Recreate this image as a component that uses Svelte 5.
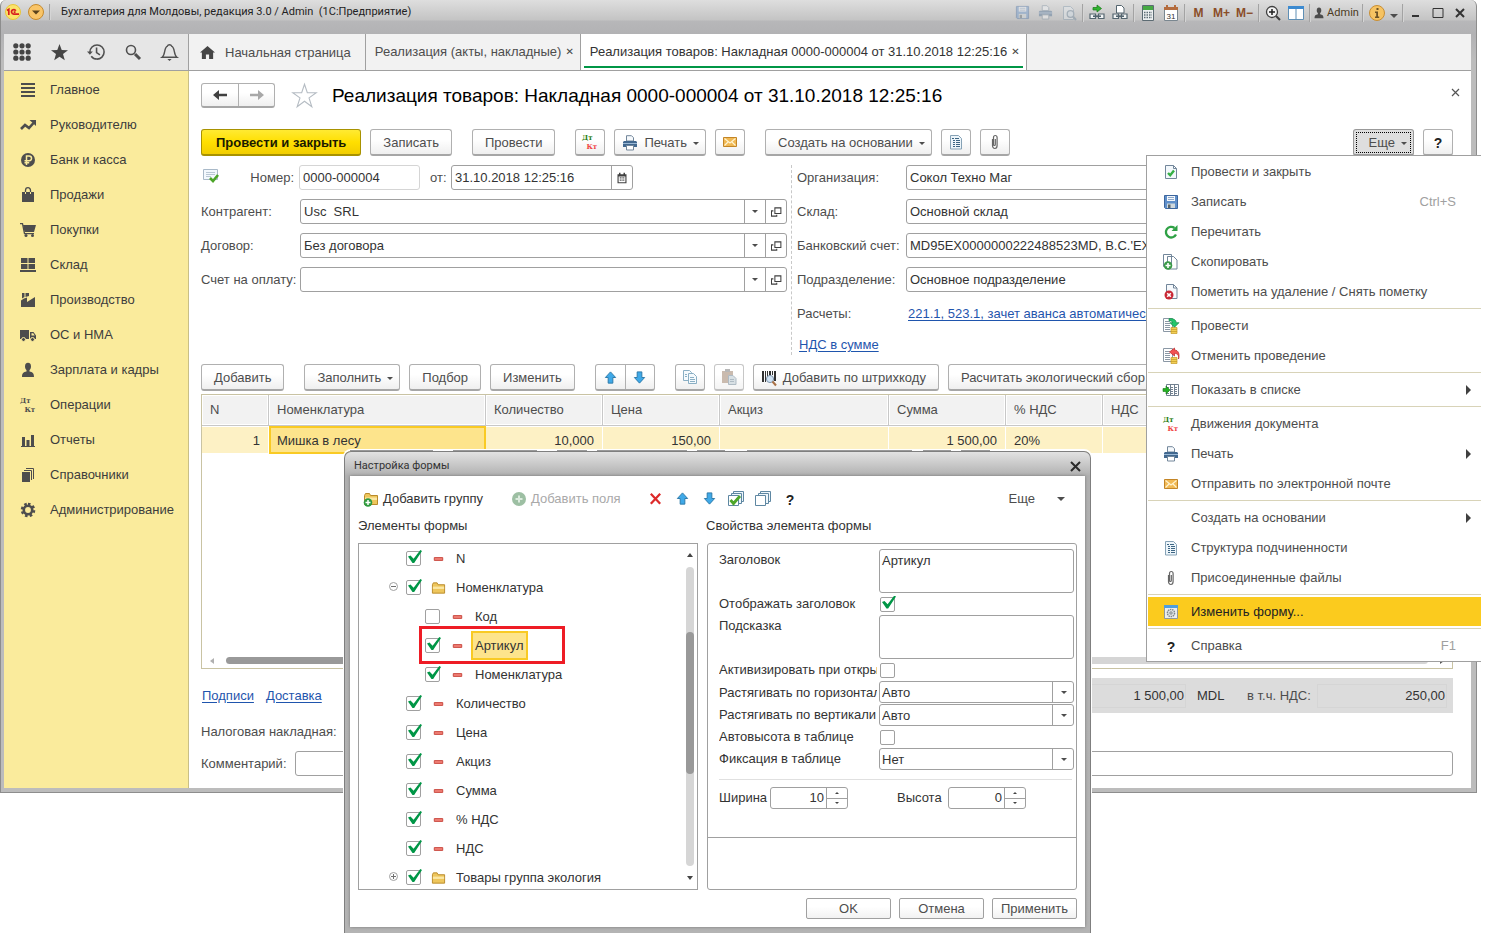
<script>
  const sections = [
    ['list', 'Главное'],
    ['trend', 'Руководителю'],
    ['ruble', 'Банк и касса'],
    ['bag', 'Продажи'],
    ['cart', 'Покупки'],
    ['boxes', 'Склад'],
    ['factory', 'Производство'],
    ['truck', 'ОС и НМА'],
    ['person', 'Зарплата и кадры'],
    ['dtktGray', 'Операции'],
    ['bars', 'Отчеты'],
    ['books', 'Справочники'],
    ['gear', 'Администрирование']
  ];

  const menu = [
    [
      { icon: 'docCheck', text: 'Провести и закрыть' },
      { icon: 'floppy', text: 'Записать', key: 'Ctrl+S' },
      { icon: 'reload', text: 'Перечитать' },
      { icon: 'docPlus', text: 'Скопировать' },
      { icon: 'docDel', text: 'Пометить на удаление / Снять пометку' }
    ],
    [
      { icon: 'post', text: 'Провести' },
      { icon: 'unpost', text: 'Отменить проведение' }
    ],
    [{ icon: 'showList', text: 'Показать в списке', sub: true }],
    [
      { icon: 'dtkt', text: 'Движения документа' },
      { icon: 'printer', text: 'Печать', sub: true },
      { icon: 'mail', text: 'Отправить по электронной почте' }
    ],
    [
      { icon: '', text: 'Создать на основании', sub: true },
      { icon: 'structure', text: 'Структура подчиненности' },
      { icon: 'clip', text: 'Присоединенные файлы' }
    ],
    [{ icon: 'formEdit', text: 'Изменить форму...', active: true }],
    [{ icon: 'question', text: 'Справка', key: 'F1' }]
  ];

  let tree = $state([
    { text: 'N', on: true },
    { text: 'Номенклатура', on: true, folder: 'open' },
    { text: 'Код', on: false, child: true },
    { text: 'Артикул', on: true, child: true, selected: true },
    { text: 'Номенклатура', on: true, child: true },
    { text: 'Количество', on: true },
    { text: 'Цена', on: true },
    { text: 'Акциз', on: true },
    { text: 'Сумма', on: true },
    { text: '% НДС', on: true },
    { text: 'НДС', on: true },
    { text: 'Товары группа экология', on: true, folder: 'closed' }
  ]);
</script>

{#snippet ic(name, size = 16)}
  <svg class="ic" width={size} height={size} viewBox="0 0 16 16" aria-hidden="true">
    {#if name === 'list'}
      <path fill="#4d4d4d" d="M1 1h14v2H1zM1 5h14v2H1zM1 9h14v2H1zM1 13h14v2H1z" />
    {:else if name === 'trend'}
      <path fill="none" stroke="#4d4d4d" stroke-width="2.6" d="M1 12l4-4 4 3 4.500-5" />
      <path fill="#4d4d4d" d="M9.500 3H16v6z" />
    {:else if name === 'ruble'}
      <circle cx="8" cy="8" r="7" fill="#4d4d4d" />
      <path fill="none" stroke="#faeb9c" stroke-width="1.500" d="M6.500 13V4h2.700a2.300 2.300 0 010 4.700H4.500M4.500 10.800h4.700" />
    {:else if name === 'bag'}
      <path fill="#4d4d4d" d="M2 5h12v10H2z" />
      <path fill="none" stroke="#4d4d4d" stroke-width="1.300" d="M5.500 5V3.500a2.500 2.800 0 015 0V5" />
      <path fill="none" stroke="#faeb9c" d="M5.500 5v2M10.500 5v2" />
    {:else if name === 'cart'}
      <path fill="none" stroke="#4d4d4d" stroke-width="1.300" d="M0 1.700h2.500l2 10h9.500" />
      <path fill="#4d4d4d" d="M3 3h13l-2 7H4.500z" />
      <circle cx="6" cy="13.500" r="1.500" fill="#4d4d4d" /><circle cx="12.500" cy="13.500" r="1.500" fill="#4d4d4d" />
    {:else if name === 'boxes'}
      <path fill="#4d4d4d" d="M1 1h6.500v5H1zM8.500 1H15v5H8.500zM1 7h6.500v5H1zM8.500 7H15v5H8.500zM0 13h16v2H0z" />
    {:else if name === 'factory'}
      <path fill="#4d4d4d" d="M1 15V8.500l3-2 3-1v4.500l8-5v10z" />
      <path fill="#4d4d4d" d="M2 1h2.500v4L2 6.500zM5.500 1H9v3L5.500 5z" />
    {:else if name === 'truck'}
      <path fill="#4d4d4d" d="M0 3h9v9H0zM10 5h3.500L16 8.500V12h-6z" />
      <path fill="#faeb9c" d="M11.500 6.200h1.700l1.500 2.300h-3.200z" />
      <circle cx="3.500" cy="12.500" r="2" fill="#4d4d4d" stroke="#faeb9c" /><circle cx="12.500" cy="12.500" r="2" fill="#4d4d4d" stroke="#faeb9c" />
    {:else if name === 'person'}
      <ellipse cx="8" cy="4.500" rx="3" ry="3.700" fill="#4d4d4d" />
      <path fill="#4d4d4d" d="M6.500 7h3v2.500c3 .5 4.500 1.500 4.500 5.500H2c0-4 1.500-5 4.500-5.500z" />
    {:else if name === 'bars'}
      <path fill="#4d4d4d" d="M1 14h14v1H1zM2 5h3v9H2zM6.500 8h3v6h-3zM11 3h3v11h-3z" />
    {:else if name === 'books'}
      <path fill="#4d4d4d" d="M2 5h8v10H2z" />
      <path fill="none" stroke="#4d4d4d" d="M4 3.500h7.500V13M6 1.500h7.500V12" />
    {:else if name === 'gear'}
      <path fill="none" stroke="#4d4d4d" stroke-width="3" stroke-dasharray="2.400 2.155" d="M8 2.200a5.800 5.800 0 110 11.600 5.800 5.800 0 010-11.600" />
      <circle cx="8" cy="8" r="4.200" fill="none" stroke="#4d4d4d" stroke-width="2.600" />
    {:else if name === 'dtkt' || name === 'dtktGray'}
      <g font-family="DejaVu Serif, serif" font-weight="bold" font-size="7">
        <text x="0" y="6" fill={name === 'dtkt' ? '#2a7d12' : '#4d4d4d'}>Дт</text>
        <text x="4.500" y="14.500" fill={name === 'dtkt' ? '#f04545' : '#4d4d4d'}>Кт</text>
      </g>
    {:else if name === 'grid'}
      {#each [2.500, 8, 13.500] as y}
        {#each [2.500, 8, 13.500] as x}<circle cx={x} cy={y} r="2.300" fill="#454545" />{/each}
      {/each}
    {:else if name === 'star'}
      <path fill="#454545" d="M8 0l2.100 5.600 5.900.2-4.700 3.700 1.700 5.800L8 12l-5 3.300 1.700-5.800L0 5.800l5.900-.2z" />
    {:else if name === 'history'}
      <path fill="none" stroke="#505050" stroke-width="1.400" d="M2.600 8A6.300 6.300 0 118.800 14.300c-2 0-3.800-1-5-2.600M8.500 4v4.500l3 2" />
      <path fill="#505050" d="M0 7.500h5.200L2.600 10.500z" />
    {:else if name === 'search'}
      <circle cx="6" cy="6" r="4.500" fill="none" stroke="#505050" stroke-width="1.600" />
      <path stroke="#505050" stroke-width="3" d="M10 10l5 5" />
    {:else if name === 'bell'}
      <path fill="none" stroke="#505050" stroke-width="1.300" d="M1 12.500h14c-3.500-2.500-1.500-9-5-10.500C9.500.3 6.500.3 6 2c-3.500 1.500-1.500 8-5 10.500z" />
      <path fill="#505050" d="M6 14h4l-2 2z" />
    {:else if name === 'home'}
      <path fill="#454545" d="M8 1l8 7h-2v7H9.700v-5H6.300v5H2V8H0z" />
    {:else if name === 'back'}
      <path fill="#404040" d="M7 3v3.700h8v2.600H7V13L1 8z" />
    {:else if name === 'fwd'}
      <path fill="#a8a8a8" d="M9 3v3.700H1v2.600h8V13l6-5z" />
    {:else if name === 'fav'}
      <path fill="#fff" stroke="#b5bcc3" stroke-width=".7" d="M8 .8l1.800 5.400h5.700l-4.600 3.300 1.800 5.700L8 11.700l-4.700 3.500 1.800-5.700L.5 6.200h5.700z" />
    {:else if name === 'docCheck'}
      <path fill="#f3f8fc" stroke="#72869a" d="M2.500 1.500h8l3 3v10h-11zM10.500 1.500v3h3" />
      <path fill="none" stroke="#35b045" stroke-width="2.400" d="M5 9l2.200 2.200L11 6.500" />
    {:else if name === 'floppy'}
      <path fill="#5f8fca" stroke="#3c659d" d="M1.500 1.500h13v13h-12l-1-1z" />
      <path fill="#f4f7fb" d="M4 2h8v5H4z" /><path stroke="#8ea9ca" d="M5 3.500h6M5 5.500h6" />
      <path fill="#cfd8dd" d="M4 9.500h8V14H4z" /><path fill="#59656a" d="M5 10.500h2.500V14H5z" />
    {:else if name === 'reload'}
      <path fill="none" stroke="#2fa145" stroke-width="2.300" d="M13 10.500A5.300 5.300 0 1111.500 4" />
      <path fill="#2fa145" d="M14.500 1v6h-6z" />
    {:else if name === 'docPlus'}
      <path fill="#fff" stroke="#72869a" d="M.5 .5h8v12h-8zM4.500 2.500h6l3.500 3.500v9H4.500z" />
      <circle cx="5" cy="11.500" r="4.300" fill="#3a9a48" /><path stroke="#fff" stroke-width="1.600" d="M5 9v5M2.500 11.500h5" />
    {:else if name === 'docDel'}
      <path fill="#f6f9fc" stroke="#72869a" d="M3.500 .5h7l3.500 3.500v10.500H3.500zM10.500 .5V4H14" />
      <circle cx="6" cy="11" r="4.500" fill="#c92835" /><path stroke="#fff" stroke-width="1.600" d="M4.200 9.200l3.600 3.600M7.800 9.200l-3.600 3.600" />
    {:else if name === 'post' || name === 'unpost'}
      <path fill="#fff" stroke="#8b98a5" d="M.5 .5h9v13h-9z" />
      <path stroke="#8b98a5" d="M2 3.500h5M2 5.500h5M2 7.500h5M2 9.500h5M2 11.500h5" />
      <path fill="#f2cf56" stroke="#c49a25" stroke-width=".7" d="M8 9.500h6v6H8zM8 11.500h6M8 13.500h6" />
      {#if name === 'post'}
        <path fill="#25c66b" stroke="#178647" stroke-width=".7" d="M6 .7c4-.5 7 1 7.300 4H16l-4.500 4.500L7 4.700h2.500C9.500 3.500 8 2.700 6 2.700z" />
      {:else}
        <path fill="#f25252" stroke="#bb2626" stroke-width=".7" d="M15.500 11c.5-4-1-5.500-4-5.500V8L6.500 4 11.500 0v2C15.500 2 17 6.500 15.500 11z" />
      {/if}
    {:else if name === 'showList'}
      <path fill="#fff" stroke="#71808f" d="M3.500 2.500h12v11h-12zM7.500 2.500v11M11.500 2.500v11" />
      <path stroke="#71808f" stroke-dasharray="2 2" d="M4 5.500h11M4 7.500h11M4 9.500h11M4 11.500h11" />
      <path fill="#23b023" stroke="#147a14" stroke-width=".6" d="M0 6.500h3V4l4 4-4 4V9.500H0z" />
    {:else if name === 'printer'}
      <path fill="#f6f9fc" stroke="#72869a" d="M4.500 6V.7h5l2 2V6z" />
      <path fill="#42688f" d="M2 6h12l1 1v5H1V7z" /><path stroke="#9bb9d6" d="M1 8.500h14" />
      <path fill="#fff" stroke="#72869a" d="M4.500 10.500h7v4.500h-7z" />
    {:else if name === 'mail'}
      <path fill="#f1b954" stroke="#c38526" d="M1.500 3.500h13v9h-13z" /><path fill="none" stroke="#fff3cf" stroke-width="1.200" d="M2.500 4.500L8 9l5.500-4.500M2.500 11.500l3.500-3.500M13.500 11.500L10 8" />
    {:else if name === 'structure'}
      <path fill="#edf5fa" stroke="#86a2b6" d="M2.500 1.500h8l3 3v10.500h-11z" />
      <path stroke="#3d6583" stroke-dasharray="2 1 4 9" d="M4 4.500h7M5 6.500h8M5 8.500h8M5 10.500h8M5 12.500h8" />
    {:else if name === 'clip'}
      <path fill="none" stroke="#666" stroke-width="1.200" d="M5.500 5v6.500a2.300 3 0 004.600 0V3.500a1.800 2 0 00-3.600 0V10.500a.9 1 0 001.800 0V5" />
    {:else if name === 'formEdit'}
      <path fill="#eceeef" stroke="#8e989e" d="M1.500 2.500h13v12h-13z" /><path fill="#4f9fdd" d="M1 1h14v3H1z" />
      <circle cx="8" cy="9" r="3.600" fill="#dfe3e5" stroke="#7d878c" stroke-width="1.400" stroke-dasharray="1.500 .7" /><circle cx="8" cy="9" r="1.200" fill="none" stroke="#7d878c" />
    {:else if name === 'up'}
      <path fill="#3fa9e8" stroke="#2b77a8" d="M8 2l5.500 6H10.500v6h-5V8H2.500z" />
    {:else if name === 'down'}
      <path fill="#3fa9e8" stroke="#2b77a8" d="M8 14l5.500-6H10.500V2h-5v6H2.500z" />
    {:else if name === 'copy'}
      <path fill="#f5fafd" stroke="#8aafc4" d="M1.500 1.500h6l2 2v8h-8z" /><path fill="#f5fafd" stroke="#8aafc4" d="M6.500 4.500h5l3 3v7h-8z" /><path stroke="#8aafc4" d="M8 8.500h4M8 10.500h5M8 12.500h5M3 5.500h2M3 7.500h2" />
    {:else if name === 'paste'}
      <path fill="#b59f8e" d="M1 2h11v12H1z" /><path fill="#9b9b9b" d="M4 0h5v3H4z" />
      <path fill="#c8d3da" stroke="#8e9fac" d="M7.500 6.500h4.500l3 3v6H7.500z" /><path stroke="#8e9fac" d="M9 10.500h4M9 12.500h4" />
    {:else if name === 'barcode'}
      <path fill="#333" d="M1 1h2v11H1zM4 1h1v11H4zM6 1h1v9H6zM8 1h2v4H8zM11 1h1v4h-1zM13 1h2v10h-2z" />
      <circle cx="9" cy="9" r="3.600" fill="#cfe2f3" stroke="#8095ab" /><path stroke="#a97146" stroke-width="2" d="M11.500 11.500l3.500 4" />
    {:else if name === 'calendar'}
      <path fill="#404040" d="M2 3h12v12H2zM4 1h2v3H4zM10 1h2v3h-2z" /><path fill="#fff" d="M3.500 6h9v7.500h-9z" />
      <path fill="#404040" d="M5 7h1.500v1.500H5zM7.300 7h1.500v1.500H7.300zM9.600 7h1.500v1.500H9.600zM5 10h1.500v1.500H5zM7.300 10h1.500v1.500H7.300zM9.600 10h1.500v1.500H9.600z" />
    {:else if name === 'open'}
      <path fill="none" stroke="#404040" stroke-width="1.400" d="M6.500 2.500h8v7.500h-8zM4.500 6.500H2v7h7v-2" />
    {:else if name === 'posted'}
      <path fill="#f3f8fd" stroke="#a9b9c8" d="M.5 1.500h14v10H.5z" /><path stroke="#b9c7d4" d="M3 4.500h9M3 6.500h9M3 8.500h5" />
      <path fill="none" stroke="#4ca528" stroke-width="2.600" d="M7 10l3 3 5-6" />
    {:else if name === 'folder' || name === 'folderAdd'}
      <path fill="#eec65c" stroke="#b98a2a" d="M1.500 13.500v-9l1-2h4l1 2h7v9z" /><path fill="#fbe7a4" d="M2 6.500h12V9H2z" />
      {#if name === 'folderAdd'}<circle cx="5" cy="11.500" r="4.300" fill="#2f9a3f" /><path stroke="#fff" stroke-width="1.500" d="M5 9v5M2.500 11.500h5" />{/if}
    {:else if name === 'fieldAdd'}
      <circle cx="8" cy="8" r="7" fill="#9dbfa3" /><path stroke="#dcebde" stroke-width="2" d="M8 4.500v7M4.500 8h7" />
    {:else if name === 'delete'}
      <path stroke="#dd2a2a" stroke-width="2.400" d="M3 3l10 10.500M13 3L3 13.500" />
    {:else if name === 'checkAll' || name === 'uncheckAll'}
      <path fill="#eef6fb" stroke="#5e87a2" d="M5.500 .5h10v10h-10z" /><path fill="#eef6fb" stroke="#5e87a2" d="M3.500 2.500h10v10h-10z" /><path fill="#fff" stroke="#5e87a2" d="M.5 4.500h10v10H.5z" />
      {#if name === 'checkAll'}<path fill="none" stroke="#4ea72a" stroke-width="2.800" d="M2.500 9l3 3.500L12 5" />{/if}
    {:else if name === 'field'}
      <path fill="#f08076" stroke="#c8433b" d="M3.500 6.500h9v3h-9z" />
    {:else if name === 'question'}
      <text x="8" y="13.500" text-anchor="middle" font-family="Liberation Sans, sans-serif" font-weight="bold" font-size="14" fill="#222">?</text>
    {:else if name === 'preview'}
      <path fill="#e7edf2" stroke="#7f97ab" d="M2.500 1.500h7l3 3v10h-10z" /><circle cx="9.500" cy="9" r="3.300" fill="#d6e4ef" stroke="#6a8399" stroke-width="1.300" /><path stroke="#6a8399" stroke-width="2" d="M12 11.500l3 3.500" />
    {:else if name === 'linkGo' || name === 'linkDoc'}
      {#if name === 'linkGo'}<path fill="#2fb52f" stroke="#157515" stroke-width=".7" d="M4 2.500h4V0l4.500 3.500L8 7V5H4z" />
      {:else}<path fill="#fff" stroke="#54656f" d="M4.500 8V.5h5l2.500 2.500v5z" />{/if}
      <path fill="#f2f4f5" stroke="#54656f" stroke-width="1.200" d="M1 9h5.500v4.500H1zM9.500 9H15v4.500H9.500z" /><path stroke="#54656f" stroke-width="1.600" d="M4 11.200h8" />
    {:else if name === 'calc'}
      <path fill="#edf0f1" stroke="#5c6b73" d="M2.500 .5h11v15h-11z" /><path fill="#46a944" d="M3 1h10v4H3z" /><path stroke="#5c6b73" stroke-width="1.600" stroke-dasharray="1.500 1" d="M4 7.500h8M4 10h8M4 12.500h8" />
    {:else if name === 'date'}
      <path fill="#fff" stroke="#7a8790" d="M1.500 3.500h13v12h-13z" /><path fill="#b46c3e" d="M1 2h14v3H1zM3 0h2v3H3zM11 0h2v3h-2z" />
      <text x="8" y="13.500" text-anchor="middle" font-family="Liberation Sans, sans-serif" font-size="8" fill="#333">31</text>
    {:else if name === 'zoomIn'}
      <circle cx="7" cy="7" r="5.500" fill="#f3f3f3" stroke="#404040" stroke-width="1.300" /><path stroke="#222" stroke-width="1.500" d="M7 4v6M4 7h6" /><path stroke="#404040" stroke-width="2.200" d="M11 11l4 4" />
    {:else if name === 'panes'}
      <path fill="#fff" stroke="#5f8fb5" d="M.5 1.500h15v13H.5z" /><path fill="#3c8ad0" d="M0 1h16v3H0z" /><path stroke="#5f8fb5" d="M8 4v11" />
    {/if}
  </svg>
{/snippet}

{#snippet caret()}<span class="caret"></span>{/snippet}

{#snippet ref(id, label, value)}
  <div class="row">
    <label for={id}>{label}</label>
    <div class="field grow">
      <input {id} type="text" {value} />
      <button type="button" class="add" aria-label="Выбрать">{@render caret()}</button>
      <button type="button" class="add" aria-label="Открыть">{@render ic('open', 12)}</button>
    </div>
  </div>
{/snippet}

<div class="desktop">
  <div class="window">
    <header class="titlebar">
      <svg width="16" height="16" viewBox="0 0 16 16" aria-hidden="true">
        <circle cx="8" cy="8" r="7.500" fill="#fbe36a" stroke="#e8c53a" />
        <path fill="none" stroke="#d8201f" stroke-width="1.700" d="M2 6.500l1.800-1.200V11M10.800 6.700a2.300 2.300 0 10-1.800 3.500H14M10.500 8.200H8.700" />
      </svg>
      <button type="button" class="round" aria-label="Главное меню">
        <svg width="16" height="16" viewBox="0 0 16 16"><circle cx="8" cy="8" r="7.500" fill="#f9c568" stroke="#c58a2e" /><path fill="#5a431c" d="M4 6.500h8L8 10.500z" /></svg>
      </button>
      <i class="sep"></i>
      <span class="caption">Бухгалтерия для Молдовы, редакция 3.0 / Admin&nbsp; (1С:Предприятие)</span>
      <div class="tools">
        <button type="button" class="dim" aria-label="Сохранить">{@render ic('floppy', 15)}</button>
        <button type="button" class="dim" aria-label="Печать">{@render ic('printer', 15)}</button>
        <button type="button" class="dim" aria-label="Просмотр">{@render ic('preview', 16)}</button>
        <i class="sep"></i>
        <button type="button" aria-label="Перейти по ссылке">{@render ic('linkGo')}</button>
        <button type="button" aria-label="Получить ссылку">{@render ic('linkDoc')}</button>
        <i class="sep"></i>
        <button type="button" aria-label="Калькулятор">{@render ic('calc')}</button>
        <button type="button" aria-label="Календарь">{@render ic('date')}</button>
        <i class="sep"></i>
        <button type="button" class="mem">M</button>
        <button type="button" class="mem">M+</button>
        <button type="button" class="mem">M−</button>
        <i class="sep"></i>
        <button type="button" aria-label="Масштаб">{@render ic('zoomIn')}</button>
        <button type="button" aria-label="Окна">{@render ic('panes')}</button>
        <i class="sep"></i>
        <button type="button" class="user">{@render ic('person', 12)}Admin</button>
        <i class="sep"></i>
        <button type="button" aria-label="О программе">
          <svg width="16" height="16" viewBox="0 0 16 16"><circle cx="8" cy="8" r="7.500" fill="#f6c362" stroke="#c88e33" /><path fill="#6d5326" d="M7.500 3h2v2h-2zM6 6.500h3v5h1.200V13H6v-1.500h1.200V8H6z" /></svg>
        </button>
        <button type="button" class="tiny" aria-label="Еще">{@render caret()}</button>
        <i class="sep"></i>
        <button type="button" class="sys" aria-label="Свернуть"><svg width="12" height="12"><path fill="#333" d="M2 8h7v2H2z" /></svg></button>
        <button type="button" class="sys" aria-label="Развернуть"><svg width="12" height="12"><path fill="none" stroke="#333" d="M1 1.500h10v9H1z" /></svg></button>
        <button type="button" class="sys" aria-label="Закрыть"><svg width="12" height="12"><path stroke="#333" stroke-width="2" d="M2 2l8 8M10 2l-8 8" /></svg></button>
      </div>
    </header>

    <div class="client">
      <div class="top">
        <div class="quick">
          <button type="button" aria-label="Меню функций">{@render ic('grid', 18)}</button>
          <button type="button" aria-label="Избранное">{@render ic('star', 17)}</button>
          <button type="button" aria-label="История">{@render ic('history', 18)}</button>
          <button type="button" aria-label="Поиск">{@render ic('search')}</button>
          <button type="button" aria-label="Оповещения">{@render ic('bell', 17)}</button>
        </div>
        <nav class="tabs">
          <a href="#home" class="tab home">{@render ic('home', 15)}Начальная страница</a>
          <a href="#list" class="tab">Реализация (акты, накладные)<b class="x">✕</b></a>
          <a href="#doc" class="tab current">Реализация товаров: Накладная 0000-000004 от 31.10.2018 12:25:16<b class="x">✕</b></a>
        </nav>
      </div>

      <div class="body">
        <nav class="side">
          {#each sections as [icon, text]}
            <a href="#{icon}">{@render ic(icon)}<span>{text}</span></a>
          {/each}
        </nav>

        <main>
          <div class="head">
            <div class="pair nav">
              <button type="button" aria-label="Назад">{@render ic('back')}</button>
              <button type="button" aria-label="Вперед">{@render ic('fwd')}</button>
            </div>
            {@render ic('fav', 25)}
            <h1>Реализация товаров: Накладная 0000-000004 от 31.10.2018 12:25:16</h1>
            <button type="button" class="close" aria-label="Закрыть"><svg width="9" height="9"><path stroke="#555" stroke-width="1.200" d="M1 1l7 7M8 1L1 8" /></svg></button>
          </div>

          <div class="bar">
            <button type="button" class="btn primary">Провести и закрыть</button>
            <button type="button" class="btn">Записать</button>
            <button type="button" class="btn far">Провести</button>
            <button type="button" class="btn icon far" aria-label="Движения документа">{@render ic('dtkt')}</button>
            <button type="button" class="btn drop pic">{@render ic('printer')}Печать{@render caret()}</button>
            <button type="button" class="btn icon" aria-label="Отправить по почте">{@render ic('mail')}</button>
            <button type="button" class="btn drop far">Создать на основании{@render caret()}</button>
            <button type="button" class="btn icon" aria-label="Структура подчиненности">{@render ic('structure')}</button>
            <button type="button" class="btn icon" aria-label="Присоединенные файлы">{@render ic('clip')}</button>
            <button type="button" class="btn drop more">Еще{@render caret()}</button>
            <button type="button" class="btn icon" aria-label="Справка">{@render ic('question')}</button>
          </div>

          <div class="form">
            <div class="left">
              <div class="row">
                <span class="state">{@render ic('posted')}</span>
                <label for="num" class="tight">Номер:</label>
                <div class="field num"><input id="num" type="text" value="0000-000004" /></div>
                <label for="date" class="from">от:</label>
                <div class="field date">
                  <input id="date" type="text" value="31.10.2018 12:25:16" />
                  <button type="button" class="add" aria-label="Выбрать дату">{@render ic('calendar', 12)}</button>
                </div>
              </div>
              {@render ref('partner', 'Контрагент:', 'Usc  SRL')}
              {@render ref('contract', 'Договор:', 'Без договора')}
              {@render ref('invoice', 'Счет на оплату:', '')}
            </div>
            <div class="right">
              {@render ref('org', 'Организация:', 'Сокол Техно Маг')}
              {@render ref('store', 'Склад:', 'Основной склад')}
              {@render ref('bank', 'Банковский счет:', "MD95EX0000000222488523MD, B.C.'EXIMBANK'")}
              {@render ref('dept', 'Подразделение:', 'Основное подразделение')}
              <div class="row"><span class="label">Расчеты:</span><a href="#calc">221.1, 523.1, зачет аванса автоматически</a></div>
              <div class="row short"><a href="#vat">НДС в сумме</a></div>
            </div>
          </div>

          <div class="bar lower">
            <button type="button" class="btn">Добавить</button>
            <button type="button" class="btn drop far">Заполнить{@render caret()}</button>
            <button type="button" class="btn">Подбор</button>
            <button type="button" class="btn">Изменить</button>
            <div class="pair far">
              <button type="button" aria-label="Вверх">{@render ic('up', 15)}</button>
              <button type="button" aria-label="Вниз">{@render ic('down', 15)}</button>
            </div>
            <button type="button" class="btn icon far" aria-label="Копировать">{@render ic('copy')}</button>
            <button type="button" class="btn icon faded" aria-label="Вставить">{@render ic('paste')}</button>
            <button type="button" class="btn pic">{@render ic('barcode')}Добавить по штрихкоду</button>
            <button type="button" class="btn">Расчитать экологический сбор</button>
          </div>

          <div class="goods">
            <table>
              <colgroup><col class="w67" /><col class="w217" /><col class="w117" /><col class="w117" /><col class="w169" /><col class="w117" /><col class="w97" /><col /></colgroup>
              <thead>
                <tr><th>N</th><th>Номенклатура</th><th>Количество</th><th>Цена</th><th>Акциз</th><th>Сумма</th><th>% НДС</th><th>НДС</th></tr>
              </thead>
              <tbody>
                <tr><td class="r">1</td><td class="sel">Мишка в лесу</td><td class="r">10,000</td><td class="r">150,00</td><td></td><td class="r">1 500,00</td><td>20%</td><td></td></tr>
              </tbody>
            </table>
            <div class="hscroll"><i class="al"></i><i class="thumb"></i><i class="ar"></i></div>
          </div>

          <div class="foot">
            <a href="#sign">Подписи</a><a href="#delivery">Доставка</a>
            <div class="totals">
              <span class="box">1 500,00</span><span class="cur">MDL</span><span class="vat">в т.ч. НДС:</span><span class="box wide">250,00</span>
            </div>
          </div>
          <div class="tax">Налоговая накладная:</div>
          <div class="row comment"><label for="comment">Комментарий:</label><div class="field grow"><input id="comment" type="text" /></div></div>
        </main>
      </div>
    </div>
  </div>

  <div class="menu" role="menu">
    {#each menu as group, g}
      {#if g}<hr />{/if}
      {#each group as item}
        <button type="button" role="menuitem" class:active={item.active}>
          {@render ic(item.icon)}<span>{item.text}</span>
          {#if item.key}<kbd>{item.key}</kbd>{/if}
          {#if item.sub}<i class="sub"></i>{/if}
        </button>
      {/each}
    {/each}
  </div>

  <section class="dialog" role="dialog" aria-labelledby="dlg">
    <div class="dtitle">
      <span id="dlg">Настройка формы</span>
      <button type="button" aria-label="Закрыть"><svg width="11" height="11"><path stroke="#2b2b2b" stroke-width="2" d="M1 1l9 9M10 1l-9 9" /></svg></button>
    </div>
    <div class="dbody">
      <div class="dtools">
        <button type="button" class="t1">{@render ic('folderAdd')}Добавить группу</button>
        <button type="button" class="t2" disabled>{@render ic('fieldAdd')}Добавить поля</button>
        <button type="button" aria-label="Удалить">{@render ic('delete', 15)}</button>
        <button type="button" aria-label="Вверх">{@render ic('up', 15)}</button>
        <button type="button" aria-label="Вниз">{@render ic('down', 15)}</button>
        <button type="button" aria-label="Отметить все">{@render ic('checkAll')}</button>
        <button type="button" aria-label="Снять все">{@render ic('uncheckAll')}</button>
        <button type="button" aria-label="Справка">{@render ic('question')}</button>
        <button type="button" class="dmore">Еще{@render caret()}</button>
      </div>
      <div class="cols">
        <h2>Элементы формы</h2>
        <h2>Свойства элемента формы</h2>
        <div class="tree">
          <ul>
            {#each tree as node}
              <li class:child={node.child}>
                <span class="exp">
                  {#if node.folder}
                    <svg width="9" height="9"><circle cx="4.500" cy="4.500" r="4" fill="#fff" stroke="#a0a0a0" /><path stroke="#707070" d={node.folder === 'open' ? 'M2 4.500h5' : 'M2 4.500h5M4.500 2v5'} /></svg>
                  {/if}
                </span>
                <label>
                  <input type="checkbox" bind:checked={node.on} />
                  {@render ic(node.folder ? 'folder' : 'field')}
                  <span class="name" class:picked={node.selected}>{node.text}</span>
                </label>
                {#if node.selected}<i class="mark"></i>{/if}
              </li>
            {/each}
          </ul>
          <div class="vscroll"><i class="au"></i><div class="track"><i></i></div><i class="ad"></i></div>
        </div>
        <div class="props">
          <div class="grid">
            <label for="p1" class="upper">Заголовок</label><textarea id="p1">Артикул</textarea>
            <label for="p2">Отображать заголовок</label><input id="p2" type="checkbox" checked />
            <label for="p3" class="upper">Подсказка</label><textarea id="p3"></textarea>
            <label for="p4">Активизировать при открытии</label><input id="p4" type="checkbox" />
            <label for="p5">Растягивать по горизонтали</label><div class="pick"><select id="p5"><option>Авто</option></select><i>{@render caret()}</i></div>
            <label for="p6">Растягивать по вертикали</label><div class="pick"><select id="p6"><option>Авто</option></select><i>{@render caret()}</i></div>
            <label for="p7">Автовысота в таблице</label><input id="p7" type="checkbox" />
            <label for="p8">Фиксация в таблице</label><div class="pick"><select id="p8"><option>Нет</option></select><i>{@render caret()}</i></div>
          </div>
          <div class="sizes">
            <label for="w">Ширина</label>
            <div class="spin"><input id="w" type="text" value="10" /><span><button type="button" aria-label="Больше"><i class="su"></i></button><button type="button" aria-label="Меньше"><i class="sd"></i></button></span></div>
            <label for="h" class="apart">Высота</label>
            <div class="spin"><input id="h" type="text" value="0" /><span><button type="button" aria-label="Больше"><i class="su"></i></button><button type="button" aria-label="Меньше"><i class="sd"></i></button></span></div>
          </div>
          <div class="hint"></div>
        </div>
      </div>
      <div class="actions">
        <button type="button">OK</button><button type="button">Отмена</button><button type="button">Применить</button>
      </div>
    </div>
  </section>
</div>

<style>
  :global(body) { background: #fff; }
  .desktop, .desktop * { box-sizing: border-box; }
  .desktop {
    position: relative;
    min-height: 933px;
    overflow: hidden;
    font: 13px/16px "Liberation Sans", Arial, sans-serif;
    color: #4d4d4d;
  }
  button, input, select, textarea { font: inherit; color: inherit; margin: 0; }
  button { background: none; border: 0; padding: 0; display: flex; align-items: center; justify-content: center; white-space: nowrap; }
  a { color: #1f55ad; text-underline-offset: 2px; }
  .ic { flex: none; display: block; overflow: visible; }
  .caret { flex: none; border: 3px solid transparent; border-top-color: #4d4d4d; border-bottom: 0; }

  /* main window frame */
  .window {
    margin-right: 8px;
    padding: 0 5px 4px 3px;
    border: 1px solid #8d8d8d;
    border-top: 0;
    border-radius: 6px 6px 0 0;
    background: linear-gradient(to bottom, #dedede 0, #c4c4c4 20px, #b7b7b9 21px, #b2b2b4 34px, #bcbcbc 60px);
  }
  .titlebar { display: flex; align-items: flex-start; height: 34px; padding: 4px 0 0 1px; }
  .round { margin-left: 7px; }
  .titlebar .sep { width: 1px; height: 18px; margin: 0 1px 0 2px; background: #a3a3a3; border-right: 1px solid #d5d5d5; box-sizing: content-box; flex: none; }
  .titlebar > .sep { margin-left: 5px; height: 16px; }
  .caption { margin-left: 9px; font: 11px/16px Roboto, sans-serif; color: #222; white-space: nowrap; }
  .tools { display: flex; margin-left: auto; }
  .tools button { width: 23px; height: 17px; }
  .tools .dim { opacity: .4; }
  .tools .mem { font-weight: bold; font-size: 12px; color: #8a4d28; }
  .tools .user { width: 48px; gap: 2px; font: 11px/16px Roboto, sans-serif; color: #4a3a22; }
  .tools .tiny { width: 12px; padding-top: 6px; }
  .tools .tiny .caret { border-width: 4px 4px 0; }
  .tools .sys { width: 22px; }

  .client { background: #fff; }
  .top { display: flex; height: 37px; background: #f2f2f2; border-bottom: 1px solid #a0a0a0; }
  .quick { display: flex; width: 185px; border-right: 1px solid #a0a0a0; background: #e6e6e6; }
  .quick button { width: 37px; }
  .tabs { display: flex; }
  .tab { display: flex; align-items: center; padding: 0 6px 0 9px; border-right: 1px solid #a0a0a0; color: #4d4d4d; text-decoration: none; white-space: nowrap; }
  .home { gap: 10px; padding: 1px 14px 0 11px; }
  .x { margin-left: 4px; font: bold 10px/12px "DejaVu Sans", sans-serif; color: #444; }
  .current { position: relative; background: #fff; color: #333; }
  .current::after { content: ""; position: absolute; left: 3px; right: 3px; bottom: 2px; height: 2px; background: #009646; }

  .body { display: flex; }
  .side { flex: none; width: 185px; padding-top: 1px; background: #faeb9c; border-right: 1px solid #c9bf86; }
  .side a { display: flex; align-items: center; gap: 14px; height: 35px; padding-left: 16px; color: #3d3d3d; text-decoration: none; }

  main { flex: 1; min-width: 0; padding: 12px 18px 12px 12px; }
  .head { display: flex; align-items: center; height: 25px; gap: 17px; }
  .pair { display: flex; border: 1px solid #b0b0b0; border-bottom: 2px solid #a6a6a6; border-radius: 3px; background: linear-gradient(#fff 40%, #efefef); height: 27px; }
  .pair button { width: 29px; }
  .pair button + button { border-left: 1px solid #b0b0b0; }
  .pair.nav { height: 25px; }
  .pair.nav button { width: 36px; }
  h1 { flex: 1; min-width: 0; margin: 0 0 0 -2px; font: 19px/24px "Liberation Sans", Arial, sans-serif; color: #000; white-space: nowrap; }
  .close { width: 9px; margin-right: -7px; padding-bottom: 7px; }

  .bar { display: flex; gap: 9px; margin-top: 21px; }
  .bar .far { margin-left: 11px; }
  .btn {
    flex: none; height: 27px; padding: 2px 12px 0;
    border: 1px solid #b0b0b0; border-bottom: 2px solid #a6a6a6; border-radius: 3px;
    background: linear-gradient(#fff 40%, #efefef);
  }
  .btn.icon { width: 30px; padding: 0; }
  .btn.drop { padding-right: 6px; gap: 6px; }
  .btn.pic { padding-left: 7px; gap: 6px; }
  .btn.faded { opacity: .7; }
  .btn.primary { padding: 2px 14px 0; font-weight: bold; color: #1a1a00; border-color: #a89200; background: linear-gradient(#ffea33, #ffdf00 50%, #f2cd00); }
  .more { width: 61px; margin-left: auto; justify-content: flex-end; background: #dedede; border-color: #999; outline: 1px dotted #000; outline-offset: -4px; }
  .bar.lower { margin-top: 9px; }

  .form { display: grid; grid-template-columns: 591fr 661fr; margin-top: 9px; }
  .left { padding-right: 4px; border-right: 1px dashed #c8c8c8; }
  .left, .right { display: flex; flex-direction: column; gap: 9px; min-width: 0; }
  .right { padding-left: 5px; }
  .row { display: flex; align-items: center; height: 25px; white-space: nowrap; }
  .short { height: 20px; padding-left: 2px; }
  .state { width: 18px; padding: 0 0 3px 2px; }
  .left label { flex: none; width: 99px; }
  .left .tight { width: 80px; padding-right: 5px; text-align: right; }
  .left .from { width: 31px; padding-left: 10px; }
  .right label { flex: none; width: 109px; }
  .label { flex: none; width: 111px; }
  .field { display: flex; height: 25px; border: 1px solid #a0a0a0; border-radius: 3px; background: #fff; color: #333; overflow: hidden; }
  .grow { flex: 1; min-width: 0; }
  .field input { flex: 1; min-width: 0; width: 100%; border: 0; padding: 0 3px; background: none; outline: 0; }
  .add { flex: none; width: 21px; border-left: 1px solid #a0a0a0; }
  .num { width: 121px; border-color: #d5d5d5; }
  .date { width: 182px; }

  .goods { display: flex; flex-direction: column; justify-content: space-between; height: 275px; margin-top: 3px; border: 1px solid #c9c3a3; }
  table { width: 100%; table-layout: fixed; border-collapse: separate; border-spacing: 0; }
  .w67 { width: 67px; } .w97 { width: 97px; } .w117 { width: 117px; } .w169 { width: 169px; } .w217 { width: 217px; }
  th { height: 31px; padding: 0 8px; text-align: left; font-weight: normal; background: #f2f2f2; border-right: 1px solid #c8c8c8; border-bottom: 1px solid #c8c8c8; box-shadow: inset 0 0 0 1px #fff; }
  td { height: 28px; padding: 2px 8px 0; color: #333; background: #fdf1c5; border: 0 solid #fff; border-width: 1px 1px 1px 0; }
  .r { text-align: right; }
  td.sel { background: #fde48c; border: 2px solid #f9ca24; padding: 2px 6px 0; }
  .hscroll { display: flex; align-items: center; height: 15px; padding: 0 8px; gap: 12px; }
  .hscroll .thumb { flex: 1; height: 7px; border-radius: 4px; background: linear-gradient(to right, #999 50%, #d5d5d5 50%); }
  .al, .ar { border: 3px solid transparent; border-right: 4px solid #b0b0b0; border-left: 0; }
  .ar { border-left: 4px solid #555; border-right: 0; }

  .foot { display: flex; align-items: center; height: 35px; margin-top: 9px; padding-left: 1px; gap: 12px; }
  .totals { display: flex; align-items: center; align-self: stretch; margin-left: auto; padding: 0 6px 0 80px; background: #dcdcdc; }
  .box { width: 130px; height: 24px; padding: 4px 1px 0 0; text-align: right; border: 1px solid #d5d5d5; color: #333; line-height: 14px; }
  .cur { width: 61px; padding-left: 11px; color: #333; }
  .vat { width: 70px; }
  .tax { height: 38px; line-height: 38px; }
  .comment label { width: 94px; }

  /* command menu */
  .menu { position: absolute; top: 155px; right: 4px; width: 335px; padding: 0 0 1px 1px; background: #fff; border: 1px solid #a0a0a0; border-right: 0; }
  .menu button { width: 100%; height: 30px; justify-content: flex-start; gap: 12px; padding-left: 15px; padding-right: 10px; border: solid #fff; border-width: 1px 0 0; }
  .menu span { flex: 1; text-align: left; }
  .menu .active { background: #fbcb1e; color: #222; }
  .menu hr { height: 1px; margin: 2px 0 1px; border: 0; background: #d8d3b8; }
  kbd { font: inherit; color: #a0a0a0; margin-right: 15px; }
  .sub { border: 5px solid transparent; border-left-color: #404040; border-right: 0; }

  /* form settings dialog */
  .dialog { position: absolute; top: 451px; left: 344px; width: 747px; height: 482px; border: 1px solid #7f7f7f; border-bottom: 0; border-radius: 7px 7px 0 0; padding: 0 5px; background: linear-gradient(to bottom, #e2e2e2, #b0b0b0 24px, #b4b4b4); box-shadow: 0 -1px 0 1px #fff; color: #333; }
  .dialog::before { content: ""; position: absolute; top: -2px; left: 5px; right: 100px; height: 1px; background: linear-gradient(to right, #999 83px, #fff 83px 103px, #999 103px 187px, #fff 187px 207px, #999 207px 237px, #fff 237px 247px, #999 247px 337px, #fff 337px 347px, #999 347px 375px, #fff 375px 397px, #999 397px 562px, #fff 562px 573px, #999 573px 601px, #fff 601px 611px, #999 611px); }
  .dtitle { display: flex; justify-content: space-between; height: 24px; padding: 5px 4px 0 4px; font: 11px/18px Roboto, sans-serif; }
  .dtitle button { height: 18px; }
  .dbody { height: 451px; padding: 11px 8px 0; background: #fff; box-shadow: 0 0 3px #777; }
  .dtools { display: flex; height: 23px; padding-left: 5px; }
  .dtools button { width: 27px; }
  .dtools .t1, .dtools .t2 { width: auto; gap: 4px; }
  .dtools .t2 { margin: 0 21px 0 28px; color: #a9a9a9; }
  .dtools .dmore { width: auto; gap: 22px; margin-left: auto; margin-right: 12px; color: #4d4d4d; }
  .dmore .caret { border-width: 4px 4px 0; }
  .cols { display: grid; grid-template-columns: 340px 1fr; column-gap: 9px; }
  h2 { margin: 0; height: 33px; padding-top: 8px; font: 13px/16px "Liberation Sans", Arial, sans-serif; }
  .cols h2 + h2 { margin-left: -1px; }
  .tree { position: relative; display: flex; height: 347px; border: 1px solid #a0a0a0; overflow: hidden; }
  ul { flex: 1; margin: 0; padding: 0; list-style: none; }
  li { position: relative; display: flex; align-items: center; height: 29px; padding-left: 30px; }
  li.child { padding-left: 49px; }
  li label { display: flex; align-items: center; }
  .exp { width: 17px; height: 11px; line-height: 0; }
  li .ic { width: 15px; margin: 0 10px; }
  .name.picked { padding: 5px 3px 4px 2px; margin-left: -4px; border: 2px solid #f9ca24; background: #fde48c; height: 29px; }
  .mark { position: absolute; left: 60px; top: -5px; width: 146px; height: 38px; border: 3px solid #ee1c25; z-index: 1; }
  input[type="checkbox"] { position: relative; flex: none; appearance: none; width: 15px; height: 15px; border: 1px solid #a0a0a0; border-radius: 2px; background: #fff; }
  input[type="checkbox"]:checked::before { content: ""; position: absolute; left: 1px; top: -2px; width: 14px; height: 13px; background: #009646; clip-path: polygon(0 50%, 18% 42%, 40% 68%, 88% 0, 100% 8%, 44% 100%, 32% 100%); }
  .vscroll { display: flex; flex-direction: column; align-items: center; width: 15px; padding: 9px 0; }
  .au, .ad { border: 3px solid transparent; border-bottom: 4px solid #444; border-top: 0; }
  .ad { border-top: 4px solid #444; border-bottom: 0; }
  .track { flex: 1; width: 8px; margin: 10px 0; padding-top: 65px; border-radius: 4px; background: #d6d6d6; }
  .track i { display: block; height: 142px; border-radius: 4px; background: #999; }

  .props { display: flex; flex-direction: column; height: 347px; border: 1px solid #a0a0a0; border-radius: 3px; padding-top: 5px; }
  .grid { display: grid; grid-template-columns: 158px 1fr; grid-template-rows: 44px 22px 44px 22px 23px 22px 22px 22px; column-gap: 2px; padding: 0 2px 0 11px; align-items: center; }
  .grid label { overflow: hidden; white-space: nowrap; }
  .grid .upper { align-self: start; padding-top: 3px; }
  .grid input { margin-left: 1px; }
  textarea { height: 44px; padding: 3px 2px; border: 1px solid #a0a0a0; border-radius: 3px; resize: none; display: block; width: 100%; }
  .pick { position: relative; height: 22px; align-self: start; }
  select { appearance: none; width: 100%; height: 22px; padding: 1px 24px 0 2px; border: 1px solid #a0a0a0; border-radius: 3px; background: #fff; }
  .pick i { position: absolute; right: 0; top: 0; width: 22px; height: 22px; display: flex; align-items: center; justify-content: center; border-left: 1px solid #a0a0a0; pointer-events: none; }
  .sizes { display: flex; align-items: center; margin: 9px 4px 0 11px; padding-top: 7px; border-top: 1px solid #e0e0e0; }
  .sizes label { width: 51px; }
  .sizes .apart { margin-left: 49px; }
  .spin { display: flex; width: 78px; height: 22px; border: 1px solid #a0a0a0; border-radius: 3px; }
  .spin input { flex: 1; min-width: 0; border: 0; padding: 0 2px; text-align: right; background: none; }
  .spin span { display: flex; flex-direction: column; width: 21px; border-left: 1px solid #a0a0a0; }
  .spin button { flex: 1; }
  .spin button + button { border-top: 1px solid #a0a0a0; }
  .su, .sd { border: 2px solid transparent; border-bottom-color: #444; border-top: 0; }
  .sd { border-top: 2px solid #444; border-bottom: 0; }
  .hint { height: 52px; margin-top: auto; border-top: 1px solid #a0a0a0; }
  .actions { display: flex; justify-content: flex-end; gap: 8px; margin-top: 8px; }
  .actions button { width: 85px; height: 21px; border: 1px solid #a0a0a0; border-radius: 2px; background: linear-gradient(#fff 40%, #f2f2f2); color: #4d4d4d; }
</style>
